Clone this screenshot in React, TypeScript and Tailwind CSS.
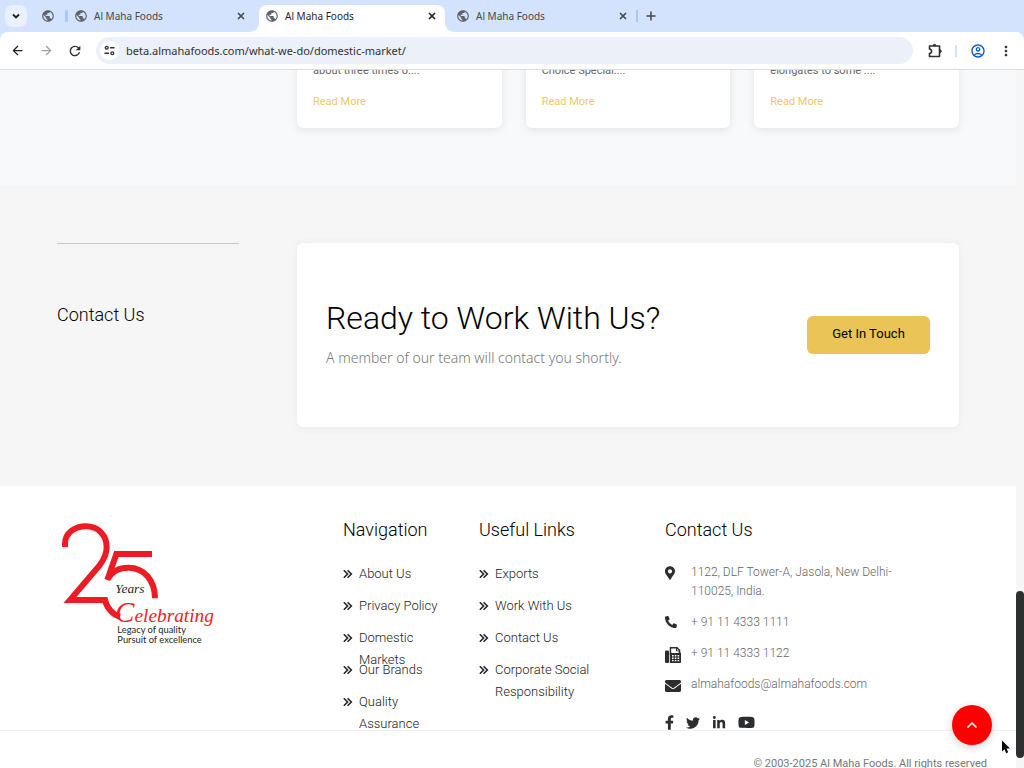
import type { ReactNode } from "react";
import {
  MdArrowBack,
  MdArrowForward,
  MdMoreVert,
  MdOutlineAccountCircle,
  MdPublic,
  MdRefresh,
} from "react-icons/md";
import {
  FaEnvelope,
  FaFacebookF,
  FaLinkedinIn,
  FaMapMarkerAlt,
  FaPhoneAlt,
  FaTwitter,
  FaYoutube,
} from "react-icons/fa";

const roboto = "font-['Roboto','Liberation_Sans',sans-serif]";

function Line({ d, className, width = 1.6 }: { d: string; className: string; width?: number }) {
  return (
    <svg viewBox="0 0 12 12" className={className} fill="none" stroke="currentColor" strokeWidth={width} aria-hidden="true">
      <path d={d} />
    </svg>
  );
}

function Tab({ active = false }: { active?: boolean }) {
  return (
    <div
      className={
        active
          ? "relative flex h-[27px] w-[186px] items-center rounded-t-[8px] bg-white pr-[7px] pb-[5px] pl-[6px] text-[#1f1f1f]"
          : "flex h-[27px] w-[186px] items-center pr-[7px] pb-[5px] pl-[6px] text-[#474747]"
      }
    >
      {active && (
        <>
          <span className="absolute bottom-0 -left-2 size-2 bg-[radial-gradient(circle_at_0_0,transparent_7px,white_8px)]" />
          <span className="absolute -right-2 bottom-0 size-2 bg-[radial-gradient(circle_at_100%_0,transparent_7px,white_8px)]" />
        </>
      )}
      <MdPublic className="size-[14px] shrink-0 text-[#5f6368]" />
      <span className="ml-[6px] flex-1 text-[10px] leading-4">Al Maha Foods</span>
      <button type="button" aria-label="Close tab" className="flex">
        <Line d="M3 3L9 9M9 3L3 9" className="size-[12px]" />
      </button>
    </div>
  );
}

function Browser() {
  return (
    <header className="shrink-0 bg-[#d3e3fd] font-['Noto_Sans','Open_Sans',sans-serif]">
      <div className="flex h-8 items-end pl-[5px]">
        <button
          type="button"
          aria-label="Search tabs"
          className="mb-[5px] flex size-[22px] items-center justify-center rounded-[7px] bg-[#e9f0fe] text-[#1f1f1f]"
        >
          <Line d="M3 4.5L6 7.5L9 4.5" className="size-[12px]" width={1.8} />
        </button>
        <div className="flex h-[22px] items-center self-center pl-[14px]">
          <MdPublic className="size-[14px] text-[#5f6368]" />
          <span className="ml-[10px] h-3 w-[3px] rounded-sm bg-[#a8c7fa]" />
        </div>
        <div className="flex gap-[5px]">
          <Tab />
          <Tab active />
          <Tab />
        </div>
        <div className="flex h-[22px] items-center self-center">
          <span className="h-3 w-[2px] bg-[#a8c7fa]" />
          <button type="button" aria-label="New tab" className="ml-[7px] text-[#474747]">
            <Line d="M6 1.5V10.5M1.5 6H10.5" className="size-[12px]" width={1.5} />
          </button>
        </div>
      </div>
      <div className="flex h-[38px] items-center rounded-t-[8px] border-b border-[#dcdcdc] bg-white pr-[10px] pl-[10px] text-[#474747]">
        <button type="button" aria-label="Back" className="text-[#1f1f1f]">
          <MdArrowBack className="size-[15px]" />
        </button>
        <button type="button" aria-label="Forward" className="ml-[14px] text-[#a0a0a0]">
          <MdArrowForward className="size-[15px]" />
        </button>
        <button type="button" aria-label="Reload" className="ml-[13px] text-[#303030]">
          <MdRefresh className="size-[16px]" />
        </button>
        <div className="ml-[13px] flex h-[27px] flex-1 items-center rounded-full bg-[#ecf0f9] pl-1">
          <span className="flex size-[19px] items-center justify-center rounded-full bg-white">
            <svg viewBox="0 0 12 12" className="size-[11px]" fill="none" stroke="#303030" strokeWidth="1.4">
              <circle cx="3" cy="3" r="1.6" />
              <path d="M6.5 3H11.5M0.5 9H5.5" />
              <circle cx="9" cy="9" r="1.6" />
            </svg>
          </span>
          <input
            aria-label="Address"
            defaultValue="beta.almahafoods.com/what-we-do/domestic-market/"
            className="ml-[7px] min-w-0 flex-1 bg-transparent text-[11px] leading-4 text-[#303030] outline-none"
          />
        </div>
        <button type="button" aria-label="Extensions" className="ml-[14px] text-[#303030]">
          <svg viewBox="0 0 16 16" className="size-[16px]" fill="none" stroke="currentColor" strokeWidth="1.6">
            <path d="M2.5 3H12.5V13.5H2.5V10.5C5.3 10 5.3 6.5 2.5 6Z" strokeLinejoin="round" />
            <path d="M6 2.6C6 0.9 9 0.9 9 2.6ZM13 6.8C14.8 6.8 14.8 9.7 13 9.7Z" fill="currentColor" strokeWidth="0.8" />
          </svg>
        </button>
        <span className="ml-3 h-3 w-[2px] bg-[#d3e3fd]" />
        <button type="button" aria-label="Profile" className="ml-[13px] text-[#0b57d0]">
          <MdOutlineAccountCircle className="size-[16px]" />
        </button>
        <button type="button" aria-label="Menu" className="ml-3 text-[#303030]">
          <MdMoreVert className="size-[16px]" />
        </button>
      </div>
    </header>
  );
}

function Logo() {
  return (
    <svg viewBox="51 51 480 420" className="h-[140px] w-[160px]" role="img" aria-label="25 Years Celebrating">
      <g fill="none" stroke="#ed1c24" strokeWidth="18" strokeMiterlimit="10">
        <path d="M75 138V128C75 95 105 76 138 76C175 76 200 103 200 138C200 165 188 181 178 194L90 297H195C200 320 218 341 240 347" />
        <path d="M336 159H229L202 237" />
        <path d="M204 233C215 212 238 200 266 200C312 200 345 238 345 292" />
      </g>
      <g className="font-['Liberation_Serif',serif] italic">
        <text x="226" y="277" fontSize="40" fill="#231f20">Years</text>
        <text x="226" y="362" fontSize="58" fill="#ed1c24">
          <tspan fontSize="86">C</tspan>elebrating
        </text>
      </g>
      <g className="font-['Lato',sans-serif]" fontSize="28" fill="#231f20">
        <text x="232" y="397">Legacy of quality</text>
        <text x="232" y="425">Pursuit of excellence</text>
      </g>
    </svg>
  );
}

function FaxIcon() {
  return (
    <svg viewBox="0 0 16 16" className="size-[16px]" aria-hidden="true">
      <rect x="0" y="3.5" width="4" height="12.5" rx="1.2" fill="currentColor" />
      <path d="M5.5 8V0.8H12L14.5 3.3V8" fill="none" stroke="currentColor" strokeWidth="1.5" />
      <path d="M11.5 1V4H14.5" fill="none" stroke="currentColor" strokeWidth="1" />
      <path d="M4.8 5.5H15C15.6 5.5 16 6 16 6.5V15C16 15.6 15.6 16 15 16H4.8Z" fill="currentColor" />
      <path d="M6.5 2H11V4.5H13.5V6H6.5Z" fill="#fff" />
      <path d="M7 8.8H8.6M9.8 8.8H11.4M12.6 8.8H14.2M7 11.2H8.6M9.8 11.2H11.4M12.6 11.2H14.2M7 13.6H8.6M9.8 13.6H11.4M12.6 13.6H14.2" stroke="#fff" strokeWidth="1.4" />
    </svg>
  );
}

const products = ["about three times o....", "Choice Special....", "elongates to some ...."];

function LinkColumn({ title, links, className }: { title: string; links: string[]; className: string }) {
  return (
    <nav aria-label={title} className={className}>
      <h3 className="text-[18px] leading-6 font-light text-black">{title}</h3>
      <ul className="mt-[21px] text-[13px] leading-[22px] font-light text-[#222]">
        {links.map((link) => (
          <li key={link} className="h-8">
            <a href="#" className="flex">
              <Line d="M1 1.5L5.5 6L1 10.5M5.5 1.5L10 6L5.5 10.5" className="mt-[6px] size-[10px] shrink-0" width={1.9} />
              <span className="ml-[6px]">{link}</span>
            </a>
          </li>
        ))}
      </ul>
    </nav>
  );
}

function ContactRow({ icon, children }: { icon: ReactNode; children: ReactNode }) {
  return (
    <li className="flex">
      <span className="flex w-[26px] shrink-0 pt-[3px] text-[#2b2d2f]">{icon}</span>
      <span>{children}</span>
    </li>
  );
}

export default function App() {
  return (
    <div className="flex h-screen flex-col overflow-hidden bg-white">
      <Browser />
      <div className={`relative flex min-h-0 flex-1 ${roboto}`}>
        <main className="min-w-0 flex-1 overflow-hidden">
          <section className="flex h-[115px] items-end overflow-hidden bg-[#f8f9fb] pr-[57px] pb-[57px] pl-[297px]">
            <div className="grid flex-1 grid-cols-3 gap-6">
              {products.map((text) => (
                <article
                  key={text}
                  className="rounded-md bg-white p-4 text-[11px] leading-5 shadow-[0_2px_8px_rgba(0,0,0,0.09)]"
                >
                  <p className="text-[#666]">{text}</p>
                  <a href="#" className="mt-[11px] block text-[#edc967]">
                    Read More
                  </a>
                </article>
              ))}
            </div>
          </section>

          <section className="flex bg-[#f6f6f6] px-[57px] pt-[58px] pb-[59px]">
            <div className="mr-[58px] w-[182px] shrink-0 border-t border-[#c6c6c6] pt-[59px]">
              <h2 className="text-[18px] leading-6 font-light text-black">Contact Us</h2>
            </div>
            <div className="flex h-[184px] flex-1 items-center justify-between rounded-md bg-white px-[29px] shadow-[0_1px_8px_rgba(0,0,0,0.06)]">
              <div className="pb-[2px]">
                <h2 className="text-[32px] leading-10 font-light text-black">Ready to Work With Us?</h2>
                <p className="mt-2 font-['Noto_Sans','Open_Sans',sans-serif] text-[14px] leading-6 font-light text-[#777]">
                  A member of our team will contact you shortly.
                </p>
              </div>
              <button
                type="button"
                className="h-[38px] w-[123px] rounded-md bg-[#eac457] pb-[2px] text-[13px] text-black"
              >
                Get In Touch
              </button>
            </div>
          </section>

          <footer className="bg-white">
            <div className="flex h-[245px] border-b border-[#f1f1f1] pt-8 pl-[57px]">
              <div className="w-[286px] shrink-0">
                <Logo />
              </div>
              <LinkColumn
                title="Navigation"
                links={["About Us", "Privacy Policy", "Domestic Markets", "Our Brands", "Quality Assurance"]}
                className="w-[96px] shrink-0"
              />
              <LinkColumn
                title="Useful Links"
                links={["Exports", "Work With Us", "Contact Us", "Corporate Social Responsibility"]}
                className="ml-10 w-[130px] shrink-0"
              />
              <div className="ml-14 w-[240px] shrink-0">
                <h3 className="text-[18px] leading-6 font-light text-black">Contact Us</h3>
                <ul className="mt-[21px] flex flex-col gap-3 text-[12px] leading-[19px] font-light text-[#666]">
                  <ContactRow icon={<FaMapMarkerAlt className="h-[14px] w-[10px]" />}>
                    1122, DLF Tower-A, Jasola, New Delhi-110025, India.
                  </ContactRow>
                  <ContactRow icon={<FaPhoneAlt className="size-[12px]" />}>+ 91 11 4333 1111</ContactRow>
                  <ContactRow icon={<FaxIcon />}>+ 91 11 4333 1122</ContactRow>
                  <ContactRow icon={<FaEnvelope className="size-[16px]" />}>almahafoods@almahafoods.com</ContactRow>
                </ul>
                <div className="mt-5 flex items-center gap-3 text-[#2b2d2f]">
                  <a href="#" aria-label="Facebook"><FaFacebookF className="h-[15px] w-[9px]" /></a>
                  <a href="#" aria-label="Twitter"><FaTwitter className="size-[14px]" /></a>
                  <a href="#" aria-label="LinkedIn"><FaLinkedinIn className="size-[14px]" /></a>
                  <a href="#" aria-label="YouTube"><FaYoutube className="size-[17px]" /></a>
                </div>
              </div>
            </div>
            <p className="pt-[25px] pr-[29px] text-right text-[11px] leading-4 text-[#777]">
              © 2003-2025 Al Maha Foods. All rights reserved
            </p>
          </footer>
        </main>

        <div className="flex w-2 shrink-0 flex-col justify-end bg-[#f6f6f6] pb-[10px]">
          <div className="h-[167px] rounded-full bg-[#2d3030]" />
        </div>

        <button
          type="button"
          aria-label="Back to top"
          className="absolute right-8 bottom-[23px] flex size-10 items-center justify-center rounded-full bg-[#ff0000] text-white shadow-[0_2px_8px_rgba(0,0,0,0.2)]"
        >
          <Line d="M1.5 8.5L6 4L10.5 8.5" className="size-[12px]" width={1.5} />
        </button>
        <svg viewBox="0 0 10 14" className="absolute right-[13px] bottom-[14px] h-[14px] w-[10px]" aria-hidden="true">
          <path d="M1 0.5V11.5L3.5 9.2L5.2 13.2L7.2 12.3L5.5 8.4H9Z" fill="#000" />
        </svg>
      </div>
    </div>
  );
}
